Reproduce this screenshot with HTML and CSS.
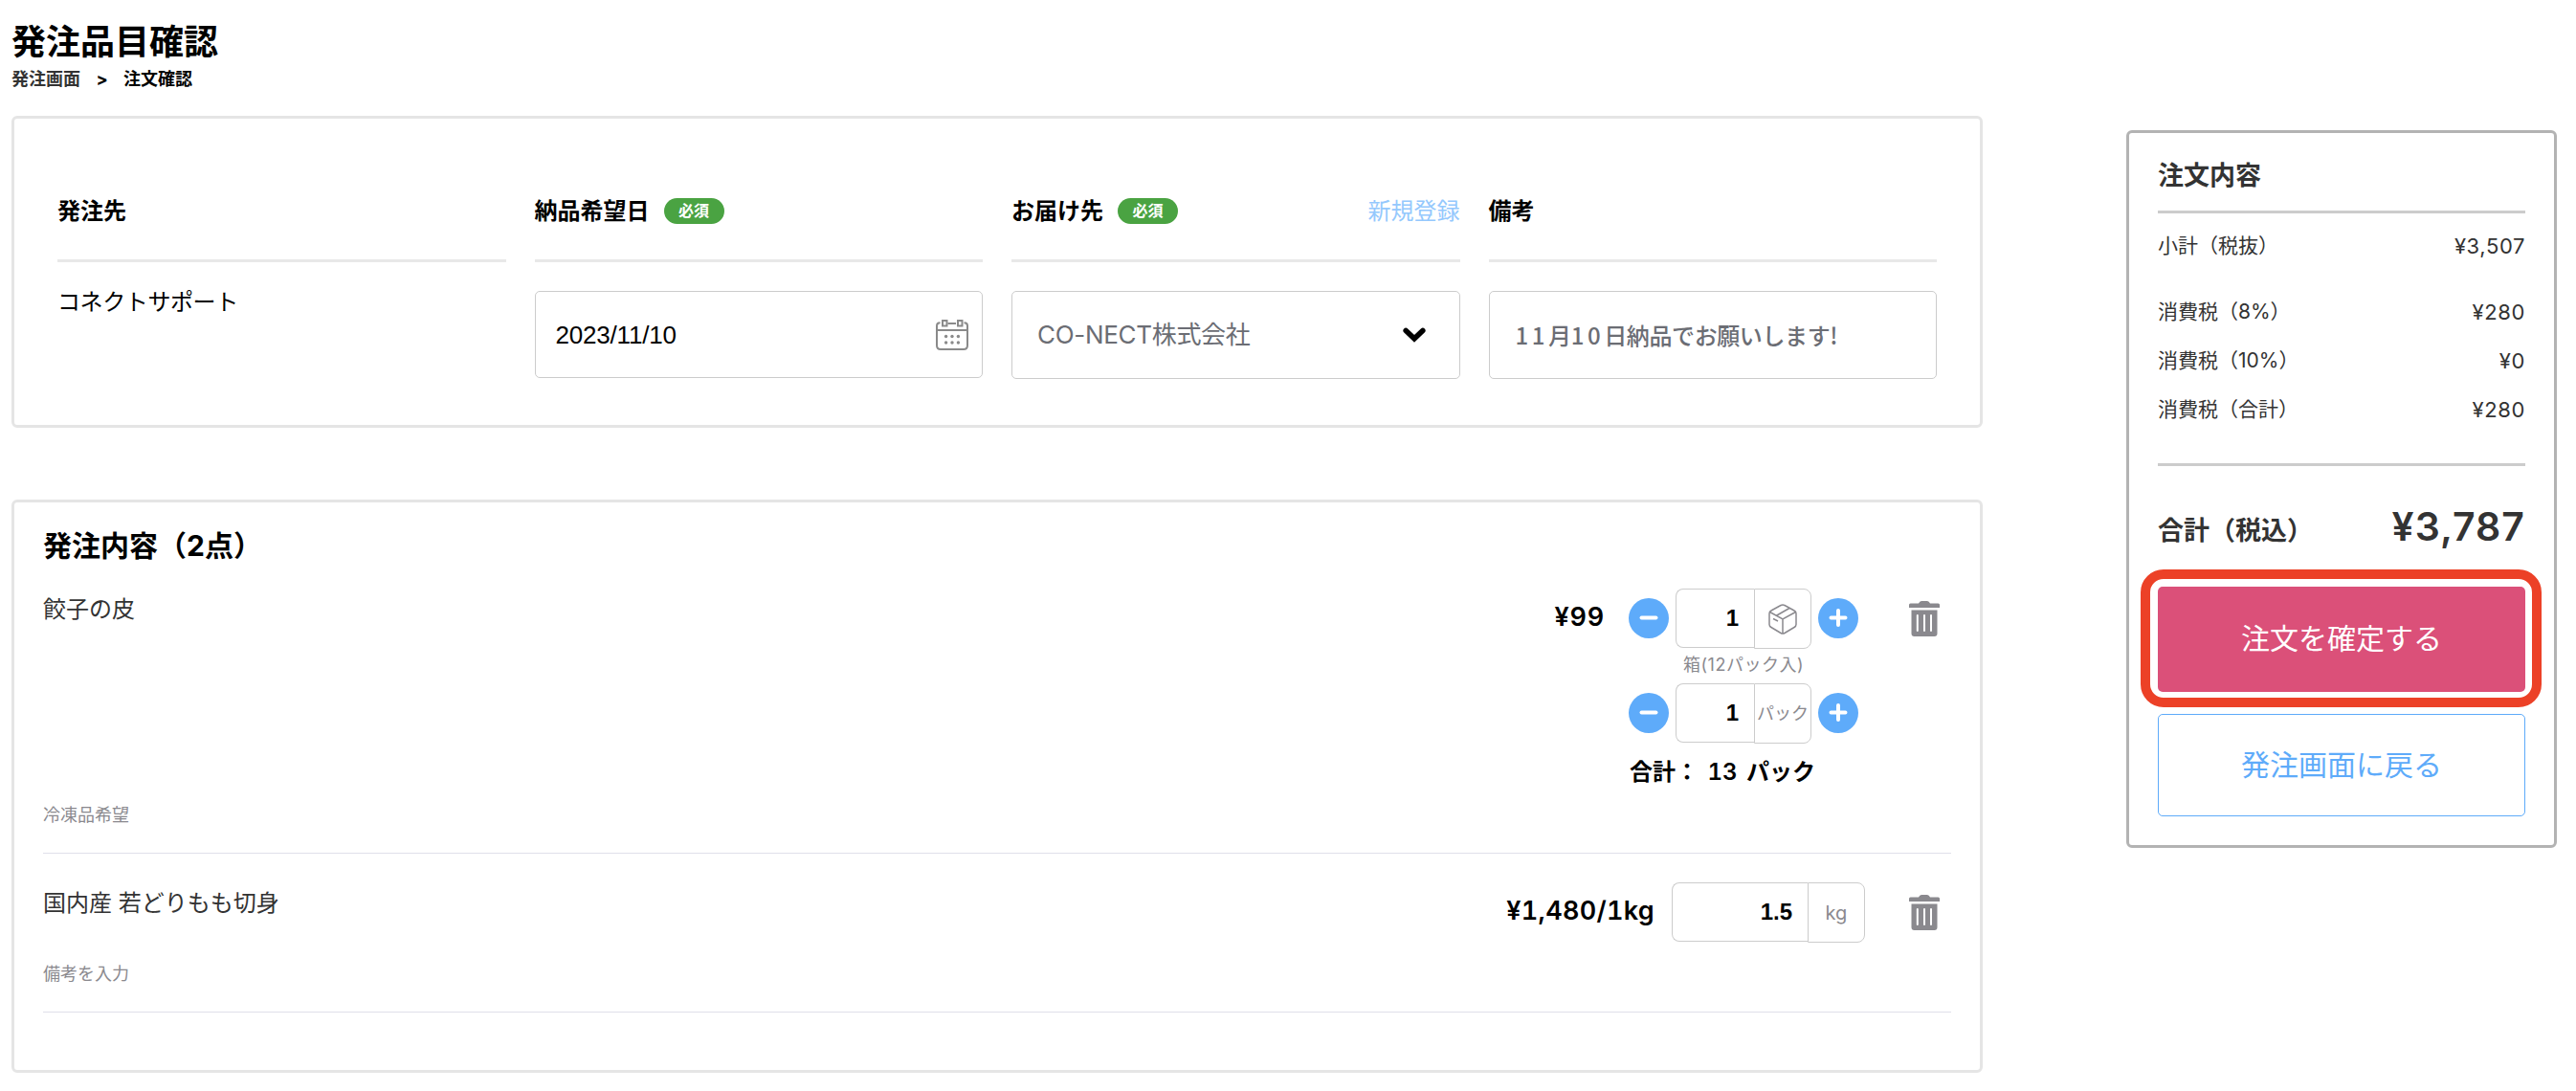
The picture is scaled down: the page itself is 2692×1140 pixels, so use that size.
FILE: index.html
```html
<!DOCTYPE html>
<html lang="ja">
  <head>
    <meta charset="UTF-8" />
    <meta name="viewport" content="width=device-width, initial-scale=1.0" />
    <title>発注品目確認</title>
    <link rel="stylesheet" href="styles.css">
  </head>
  <body>
    <!-- Shared icons -->
    <svg class="sprite">
      <symbol id="icon-trash" viewBox="0 0 32 37">
        <path d="M1.500 2.500H10Q11 0 13 0h6q2 0 3 2.500H30.500Q32 2.500 32 4v3H0V4Q0 2.500 1.500 2.500Z" />
        <path fill-rule="evenodd" d="M2.500 9.500h27V34q0 3-3 3h-21q-3 0-3-3ZM8.800 14q-1 0-1 1v16q0 1 1 1t1-1V15q0-1-1-1ZM16 14q-1 0-1 1v16q0 1 1 1t1-1V15q0-1-1-1ZM23 14q-1 0-1 1v16q0 1 1 1t1-1V15q0-1-1-1Z" />
      </symbol>
    </svg>

    <div class="page">
      <main class="main">
        <h1 class="title">発注品目確認</h1>
        <nav class="breadcrumb">
          <a>発注画面</a>
          <span class="arrow">&gt;</span>
          <span>注文確認</span>
        </nav>

        <section class="card order-info">
          <div class="field">
            <div class="field-head">発注先</div>
            <p class="supplier">コネクトサポート</p>
          </div>
          <div class="field">
            <div class="field-head">納品希望日<span class="badge">必須</span></div>
            <div class="control date">
              <span>2023/11/10</span>
              <svg class="icon-calendar" width="34" height="32" viewBox="0 0 34 32">
                <g fill="none" stroke="#8a8a8a" stroke-width="2">
                  <path d="M4.500 3.300Q1 3.300 1 6.500V27q0 4 4 4h24q4 0 4-4V6.500q0-3.200-3.500-3.200M12.500 4H21" />
                  <path d="M1 11h32" />
                  <rect x="7" y="1" width="4.500" height="5.500" />
                  <rect x="23" y="1" width="4.500" height="5.500" />
                </g>
                <g fill="#8a8a8a">
                  <circle cx="10.600" cy="17.500" r="1.700" />
                  <circle cx="17" cy="17.500" r="1.700" />
                  <circle cx="23.400" cy="17.500" r="1.700" />
                  <circle cx="10.600" cy="24" r="1.700" />
                  <circle cx="17" cy="24" r="1.700" />
                  <circle cx="23.400" cy="24" r="1.700" />
                </g>
              </svg>
            </div>
          </div>
          <div class="field">
            <div class="field-head">お届け先<span class="badge">必須</span><a class="new-link">新規登録</a></div>
            <div class="control select">
              <span>CO-NECT株式会社</span>
              <svg width="24" height="16" viewBox="0 0 24 16">
                <path d="M3.200 3.500 12 11.800 20.800 3.500" fill="none" stroke="#000" stroke-width="5.600" stroke-linecap="round" />
              </svg>
            </div>
          </div>
          <div class="field">
            <div class="field-head">備考</div>
            <div class="control memo"><p><span class="digits">11</span>月<span class="digits">10</span>日納品でお願いします!</p></div>
          </div>
        </section>

        <section class="card order-items">
          <h2 class="items-title">発注内容（2点）</h2>

          <div class="item">
            <div class="item-row">
              <p class="item-name">餃子の皮</p>
              <p class="price">¥99</p>
              <div class="quantity">
                <div class="stepper">
                  <button class="round"><svg width="42" height="42" viewBox="0 0 42 42"><path d="M13.500 20.500h15" /></svg></button>
                  <div class="amount"><span class="value">1</span><span class="unit">
                    <svg class="icon-box" width="30" height="32" viewBox="0 0 30 32">
                      <path d="M13 1.500Q15 .500 17 1.500L27 7q2 1 2 3v11.500q0 2-2 3L17 30.500q-2 1-4 0L3 24.500q-2-1-2-3V10Q1 8 3 7Z" />
                      <path d="M1.500 8.500 15 16 28.500 8.500M15 16v15M8 12.500 22 4.500M5 15.500l5 2.500" />
                    </svg>
                  </span></div>
                  <button class="round"><svg width="42" height="42" viewBox="0 0 42 42"><path d="M13.500 20.500h15M21 13v15" /></svg></button>
                </div>
                <p class="pack-note">箱(12パック入)</p>
                <div class="stepper">
                  <button class="round"><svg width="42" height="42" viewBox="0 0 42 42"><path d="M13.500 20.500h15" /></svg></button>
                  <div class="amount"><span class="value">1</span><span class="unit unit-pack">パック</span></div>
                  <button class="round"><svg width="42" height="42" viewBox="0 0 42 42"><path d="M13.500 20.500h15M21 13v15" /></svg></button>
                </div>
                <p class="pack-total">合計： 13 パック</p>
              </div>
              <svg class="trash"><use href="#icon-trash" /></svg>
            </div>
            <p class="item-note">冷凍品希望</p>
          </div>

          <div class="item by-weight">
            <div class="item-row">
              <p class="item-name">国内産 若どりもも切身</p>
              <p class="price">¥1,480/1kg</p>
              <div class="amount"><span class="value">1.5</span><span class="unit">kg</span></div>
              <svg class="trash"><use href="#icon-trash" /></svg>
            </div>
            <p class="item-note">備考を入力</p>
          </div>
        </section>
      </main>

      <aside class="summary">
        <h2 class="summary-title">注文内容</h2>
        <div class="summary-row subtotal"><span>小計（税抜）</span><span class="yen">¥3,507</span></div>
        <div class="summary-row"><span>消費税（8%）</span><span class="yen">¥280</span></div>
        <div class="summary-row"><span>消費税（10%）</span><span class="yen">¥0</span></div>
        <div class="summary-row"><span>消費税（合計）</span><span class="yen">¥280</span></div>
        <div class="total">
          <span>合計（税込）</span>
          <span class="total-price">¥3,787</span>
        </div>
        <button class="btn btn-confirm">注文を確定する</button>
        <button class="btn btn-back">発注画面に戻る</button>
      </aside>
    </div>
  </body>
</html>
```

FILE: styles.css
```css
* {
  box-sizing: border-box;
}
body {
  margin: 0;
  background-color: #fff;
  color: #000;
  font-family: Inter, "Noto Sans CJK JP", sans-serif;
  font-size: 24px;
}
h1,
h2,
p {
  margin: 0;
}
button {
  font-family: inherit;
  cursor: pointer;
}
.sprite {
  display: none;
}
.page {
  display: flex;
  align-items: flex-start;
  gap: 150px;
  padding: 22px 20px 0 12px;
}
.main {
  width: 2060px;
}
.title {
  font-size: 36px;
  line-height: 44px;
}
.breadcrumb {
  display: flex;
  margin: 8px 0 29px;
  font-size: 18px;
  font-weight: bold;
  line-height: 18px;
}
.breadcrumb a {
  color: #333;
}
.breadcrumb .arrow {
  width: 45px;
  text-align: center;
}
.card {
  border: 3px solid #e5e5e5;
  border-radius: 6px;
}

/* Order info */
.order-info {
  display: grid;
  grid-template-columns: repeat(4, 1fr);
  gap: 30px;
  padding: 78px 45px 48px;
}
.field-head {
  display: flex;
  align-items: center;
  height: 72px;
  margin-bottom: 30px;
  padding-bottom: 33px;
  border-bottom: 3px solid #e8e8e8;
  font-weight: bold;
  line-height: 25px;
}
.badge {
  width: 63px;
  margin-left: 15px;
  border-radius: 14px;
  background-color: #4aa342;
  color: #fff;
  font-size: 16px;
  line-height: 27px;
  text-align: center;
}
.new-link {
  margin-left: auto;
  color: #94c8fd;
  font-weight: normal;
}
.supplier {
  letter-spacing: -0.4px;
  line-height: 24px;
}
.control {
  display: flex;
  align-items: center;
  justify-content: space-between;
  height: 92px;
  border: 1px solid #ccc;
  border-radius: 5px;
  line-height: 26px;
}
.date {
  height: 91px;
  padding: 0 14px 0 21px;
  font-family: "Liberation Sans", sans-serif;
  font-size: 26px;
  letter-spacing: -0.2px;
}
.select {
  padding: 0 35px 0 26px;
  color: #6b6d74;
  font-size: 26px;
  letter-spacing: -0.3px;
}
.memo {
  padding-left: 27px;
  color: #6b6d74;
  font-family: "Noto Sans CJK JP", sans-serif;
  font-weight: 500;
  letter-spacing: -0.4px;
}
.memo .digits {
  letter-spacing: 3.6px;
}

/* Order items */
.order-items {
  margin-top: 75px;
  padding: 25px 30px 60px;
}
.items-title {
  font-size: 30px;
  line-height: 40px;
}
.item {
  padding: 25px 0 29px;
  border-bottom: 1px solid #e0e0ea;
}
.item-row {
  display: flex;
  align-items: flex-start;
}
.item-name {
  flex: 1;
  margin-top: 10px;
  color: #333;
  line-height: 24px;
}
.price {
  margin-right: 25px;
  font-size: 27px;
  font-weight: 600;
  font-variant-numeric: tabular-nums;
  letter-spacing: 0.8px;
  line-height: 60px;
}
.stepper {
  display: flex;
  align-items: center;
  gap: 7px;
}
.round {
  width: 42px;
  height: 42px;
  margin-top: -1px;
  padding: 0;
  border: none;
  border-radius: 50%;
  background-color: #5eabfa;
}
.round svg {
  display: block;
  fill: none;
  stroke: #fff;
  stroke-width: 4;
  stroke-linecap: round;
}
.amount {
  display: flex;
  align-items: flex-start;
}
.value {
  width: 82px;
  height: 62px;
  padding-right: 16px;
  border: 1px solid #ccc;
  border-right: none;
  border-radius: 8px 0 0 8px;
  font-family: "Liberation Sans", sans-serif;
  font-weight: bold;
  line-height: 60px;
  text-align: right;
}
.unit {
  display: flex;
  align-items: center;
  justify-content: center;
  width: 60px;
  height: 63px;
  border: 1px solid #ccc;
  border-radius: 0 8px 8px 0;
  color: #8a898e;
  font-size: 20px;
  line-height: 20px;
}
.unit-pack {
  font-size: 18px;
}
.icon-box {
  fill: none;
  stroke: #8a898e;
  stroke-width: 1.5;
}
.pack-note {
  margin-bottom: 3px;
  padding-top: 1px;
  color: #8a898e;
  font-size: 18px;
  letter-spacing: 0.5px;
  line-height: 32px;
  text-align: center;
}
.pack-total {
  margin-top: 18px;
  padding-left: 1px;
  font-weight: 600;
  font-variant-numeric: tabular-nums;
  line-height: 24px;
  word-spacing: 3px;
}
.trash {
  width: 32px;
  height: 37px;
  margin: 13px 12px 0 53px;
  fill: #8a898e;
}
.item-note {
  margin-top: 23px;
  color: #8a898e;
  font-size: 18px;
  line-height: 20px;
}
.by-weight {
  padding-top: 30px;
}
.by-weight .price {
  margin-right: 18px;
  letter-spacing: 0.3px;
}
.by-weight .value {
  width: 142px;
}
.by-weight .trash {
  margin-left: 46px;
}

/* Order summary */
.summary {
  width: 450px;
  margin-top: 114px;
  padding: 25px 30px 30px;
  border: 3px solid #b3b3b3;
  border-radius: 6px;
  color: #333;
  font-size: 21px;
}
.summary-title {
  margin-bottom: 18px;
  padding-bottom: 16px;
  border-bottom: 3px solid #ccc;
  font-size: 27px;
  line-height: 40px;
}
.summary-row {
  display: flex;
  justify-content: space-between;
  margin-bottom: 19px;
  line-height: 32px;
}
.yen {
  font-size: 22px;
  letter-spacing: 0.6px;
}
.subtotal {
  margin-bottom: 37px;
}
.total {
  display: flex;
  justify-content: space-between;
  margin: 40px 0 33px;
  padding-top: 43px;
  border-top: 3px solid #ccc;
  font-size: 27px;
  font-weight: bold;
  line-height: 50px;
}
.total-price {
  margin-top: -5px;
  font-size: 41px;
  font-weight: 600;
  letter-spacing: 1px;
}
.btn {
  display: block;
  width: 100%;
  padding: 0 0 2px;
  border: none;
  border-radius: 5px;
  font-size: 30px;
  line-height: 30px;
}
.btn-confirm {
  position: relative;
  height: 110px;
  margin-bottom: 23px;
  background-color: #db5079;
  color: #fff;
}
/* Red highlight around the confirm button */
.btn-confirm::after {
  content: "";
  position: absolute;
  inset: -18px -17px -16px -18px;
  border: 10px solid #ec4127;
  border-radius: 24px;
}
.btn-back {
  height: 107px;
  border: 1px solid #5eabfa;
  background-color: #fff;
  color: #5eabfa;
}
```
